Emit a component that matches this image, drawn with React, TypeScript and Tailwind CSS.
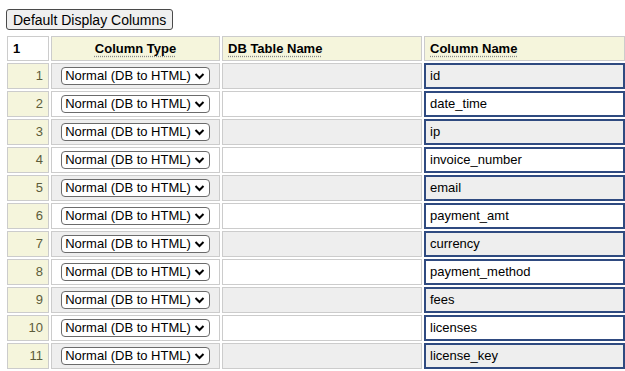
const ROWS = [
  'id',
  'date_time',
  'ip',
  'invoice_number',
  'email',
  'payment_amt',
  'currency',
  'payment_method',
  'fees',
  'licenses',
  'license_key',
]

function FakeSelect() {
  return (
    <span className="inline-flex items-center h-[18px] pl-[3px] pr-[4px] border border-[#6b6b6b] rounded-[4px] bg-white text-[13px] leading-none text-black">
      <span>Normal (DB to HTML)</span>
      <svg width="11" height="8" viewBox="0 0 11 8" className="ml-[3px]">
        <polyline points="1.5,2 5.5,6 9.5,2" fill="none" stroke="#000" strokeWidth="2" />
      </svg>
    </span>
  )
}

export default function App() {
  return (
    <div
      className="w-[625px] h-[371px] overflow-hidden bg-white px-[5px] pt-[9px] text-black text-[13px]"
      style={{ fontFamily: '"Liberation Sans", Arial, sans-serif' }}
    >
      <button className="ml-px h-[21px] px-[6px] border border-[#4a4a4a] rounded-[3px] bg-[#efefef] text-[14px] leading-none text-black">
        Default Display Columns
      </button>

      <table className="mt-[4px] border-separate border-spacing-[2px] table-fixed w-[622px]">
        <colgroup>
          <col className="w-[42px]" />
          <col className="w-[169px]" />
          <col className="w-[200px]" />
          <col className="w-[201px]" />
        </colgroup>
        <thead>
          <tr>
            <th className="h-[25px] border border-[#cccccc] bg-white text-left pl-[5px] font-bold">1</th>
            <th className="h-[25px] border border-[#cccccc] bg-[#f5f5dc] text-center font-bold">
              <span className="underline decoration-dotted decoration-[#888] underline-offset-[3px]">Column Type</span>
            </th>
            <th className="h-[25px] border border-[#cccccc] bg-[#f5f5dc] text-left pl-[5px] font-bold">
              <span className="underline decoration-dotted decoration-[#888] underline-offset-[3px]">DB Table Name</span>
            </th>
            <th className="h-[25px] border border-[#cccccc] bg-[#f5f5dc] text-left pl-[5px] font-bold">
              <span className="underline decoration-dotted decoration-[#888] underline-offset-[3px]">Column Name</span>
            </th>
          </tr>
        </thead>
        <tbody>
          {ROWS.map((name, i) => {
            const odd = i % 2 === 0
            return (
              <tr key={name}>
                <td className="h-[26px] border border-[#cccccc] bg-[#f5f5dc] text-right pr-[5px] text-[#5c5c3a]">
                  {i + 1}
                </td>
                <td className={`h-[26px] border border-[#cccccc] text-center ${odd ? 'bg-[#eeeeee]' : 'bg-white'}`}>
                  <FakeSelect />
                </td>
                <td className={`h-[26px] border border-[#cccccc] ${odd ? 'bg-[#eeeeee]' : 'bg-white'}`}></td>
                <td className={`h-[26px] border-2 border-[#2f4a80] pl-[4px] ${odd ? 'bg-[#eeeeee]' : 'bg-white'}`}>
                  {name}
                </td>
              </tr>
            )
          })}
        </tbody>
      </table>
    </div>
  )
}
